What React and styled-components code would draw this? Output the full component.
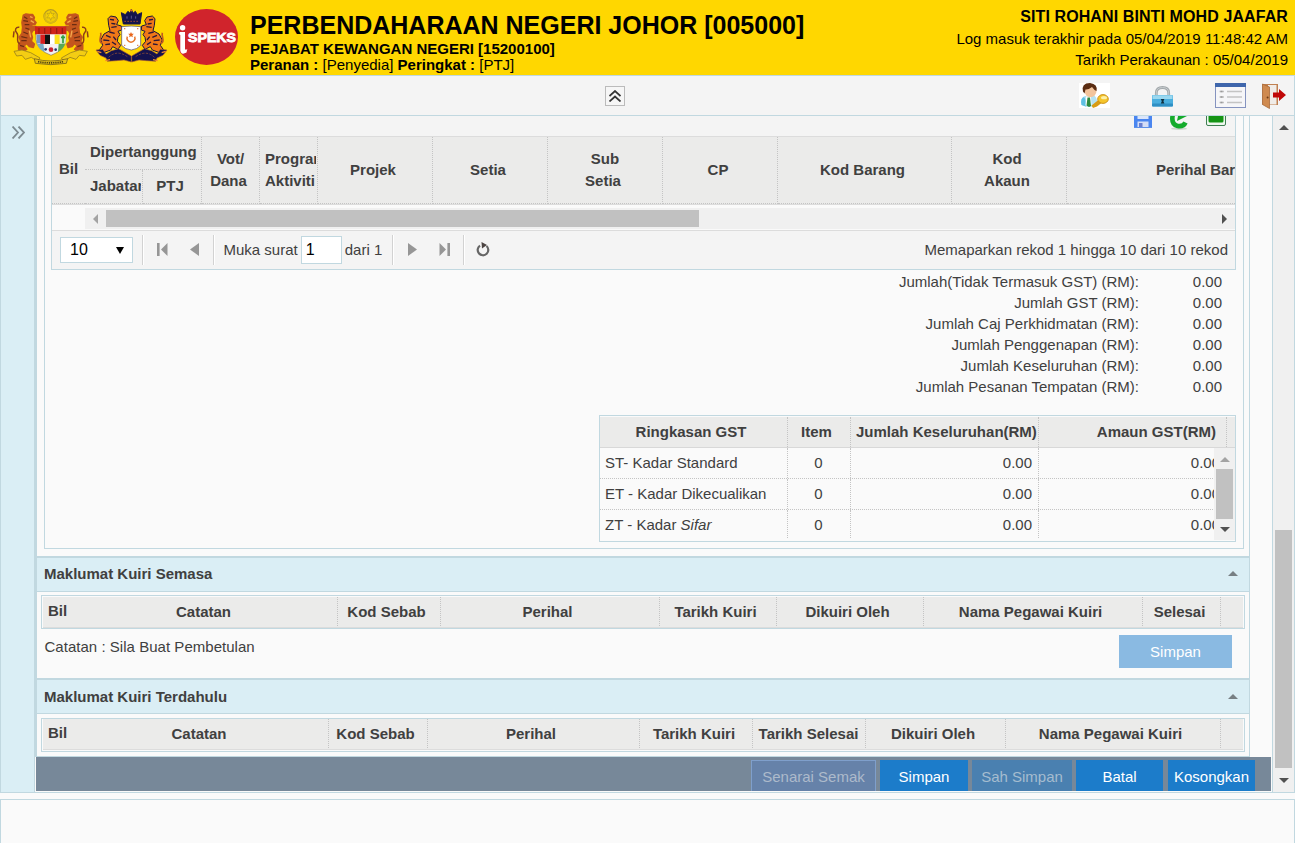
import React from "react";
import styled, { createGlobalStyle } from "styled-components";

const line = "#c1d8e0";
const dots = "#c4c4c4";

const GlobalStyle = createGlobalStyle`
  * { box-sizing: border-box; }
  body {
    margin: 0;
    background: #fafafa;
    font-family: "Liberation Sans", Arial, sans-serif;
    font-size: 15px;
    line-height: 21px;
    color: #404040;
    overflow: hidden;
  }
  svg { display: block; flex: none; }
`;

const Page = styled.div`
  width: 1295px;
  height: 843px;
  display: flex;
  flex-direction: column;
  overflow: hidden;
`;

/* ---------- banner ---------- */
const Banner = styled.header`
  height: 75px;
  flex: none;
  display: flex;
  background: #ffd700;
  color: #000;
  padding: 8px 7px 0 12px;
`;
const Logos = styled.div`
  display: flex;
  width: 238px;
  flex: none;
`;
const LogoGap = styled.i`
  width: ${(p) => p.$w}px;
  flex: none;
`;
const Titles = styled.div`
  flex: 1;
  padding-top: 3px;
`;
const Title = styled.h1`
  margin: 0;
  font-size: 25px;
  line-height: 29px;
  height: 29px;
`;
const Subtitle = styled.div`
  line-height: 17px;
  height: ${(p) => p.$h || 17}px;
  font-weight: ${(p) => (p.$bold ? 700 : 400)};
`;
const Session = styled.div`
  text-align: right;
  line-height: 21px;
`;
const UserName = styled.div`
  font-size: 16px;
  font-weight: 700;
  line-height: 20px;
  letter-spacing: 0.1px;
  margin-top: -1px;
  margin-bottom: 1px;
`;

/* ---------- toolbar ---------- */
const Toolbar = styled.nav`
  height: 41px;
  flex: none;
  display: flex;
  align-items: flex-start;
  background: #f4f4f4;
  border: 1px solid ${line};
  padding: 7px 8px 0 604px;
`;
const CollapseButton = styled.button`
  width: 20px;
  height: 20px;
  margin: 3px 454px 0 0;
  padding: 0;
  border: 1px solid #bbb;
  background: #f6f6f6;
  display: flex;
  align-items: center;
  justify-content: center;
`;
const ToolIcon = styled.div`
  width: ${(p) => p.$w}px;
  margin-right: ${(p) => p.$gap}px;
  padding-top: ${(p) => p.$top || 0}px;
  flex: none;
`;

/* ---------- body frame ---------- */
const Body = styled.main`
  height: 677px;
  flex: none;
  display: flex;
  border: 1px solid ${line};
  border-top: 0;
`;
const SideTab = styled.aside`
  width: 34px;
  flex: none;
  background: #daeef5;
  border-right: 1px solid ${line};
  padding: 10px 0 0 11px;
`;
const Work = styled.div`
  width: 1237px;
  flex: none;
  display: flex;
  flex-direction: column;
`;
const Content = styled.div`
  width: 1215px;
  height: 641px;
  border: solid ${line};
  border-width: 0 1px 1px 2px;
  display: flex;
  flex-direction: column;
`;
const Fieldset = styled.section`
  width: 1200px;
  height: 433px;
  margin: 0 0 7px 7px;
  border: solid ${line};
  border-width: 0 1px 1px 1px;
  padding-left: 6px;
  flex: none;
`;

/* ---------- main grid ---------- */
const Grid = styled.div`
  width: 1185px;
  height: 154px;
  border: solid ${line};
  border-width: 0 1px 1px 1px;
  overflow: hidden;
`;
const GridTools = styled.div`
  height: 21px;
  background: #f4f4f4;
  border-bottom: 1px solid #dcdcdc;
  display: flex;
  justify-content: flex-end;
  gap: 17px;
  padding-right: 9px;
`;
const HeadRow = styled.div`
  height: 68px;
  display: flex;
  overflow: hidden;
  background: #ebebea;
  border-bottom: 1px solid #dcdcdc;
  font-weight: 700;
`;
const HeadCell = styled.div`
  width: ${(p) => p.$w}px;
  flex: none;
  display: flex;
  flex-direction: column;
  justify-content: center;
  align-items: ${(p) => (p.$left ? "flex-start" : "center")};
  padding-left: ${(p) => p.$left || 0}px;
  padding-bottom: ${(p) => p.$lift || 0}px;
  border-bottom: 1px dotted ${dots};
  border-right: ${(p) => (p.$plain ? "0" : `1px dotted ${dots}`)};
  overflow: hidden;
  white-space: nowrap;
  line-height: 22px;
`;
const HeadText = styled.span`
  padding-right: ${(p) => (p.$trail ? 4 : 0)}px;
`;
const ClipText = styled.span`
  width: 51px;
  overflow: hidden;
`;
const HeadGroup = styled.div`
  width: 117px;
  flex: none;
  display: flex;
  flex-direction: column;
  border-right: 1px dotted ${dots};
`;
const GroupTop = styled.div`
  height: 33px;
  border-bottom: 1px dotted ${dots};
  padding: 4px 0 0 5px;
`;
const GroupSplit = styled.div`
  flex: 1;
  display: flex;
`;
const HScroll = styled.div`
  height: 25px;
  background: #fafafa;
  padding: 3px 0 0 33px;
`;
const HTrack = styled.div`
  height: 21px;
  background: #f0f0f0;
  display: flex;
  align-items: center;
  padding: 0 8px;
`;
const HThumb = styled.div`
  width: 593px;
  height: 17px;
  background: #c1c1c1;
  margin: 0 auto 0 8px;
`;
const Pager = styled.div`
  height: 39px;
  border-top: 1px solid #dcdcdc;
  background: #f4f4f4;
  display: flex;
  align-items: center;
  padding: 0 7px 0 8px;
`;
const PageSize = styled.div`
  width: 73px;
  height: 26px;
  border: 1px solid ${line};
  background: #fff;
  color: #000;
  font-size: 16px;
  display: flex;
  align-items: center;
  justify-content: space-between;
  padding: 0 8px 0 9px;
`;
const Sep = styled.i`
  width: 2px;
  height: 30px;
  background: linear-gradient(90deg, #d2d2d2 50%, #fff 50%);
  margin: 0 ${(p) => p.$r}px 0 ${(p) => p.$l}px;
`;
const PagerIcon = styled.div`
  width: 12px;
  margin-left: ${(p) => p.$l || 0}px;
  padding-bottom: 2px;
`;
const PagerText = styled.span`
  padding-bottom: 2px;
  margin-left: ${(p) => (p.$end ? "auto" : 0)};
`;
const PageInput = styled.div`
  width: 41px;
  height: 28px;
  border: 1px solid ${line};
  background: #fff;
  color: #000;
  padding: 2px 4px;
  font-size: 16px;
  margin: 0 3px 0 3px;
`;

/* ---------- totals ---------- */
const Totals = styled.dl`
  margin: 1px 0 18px;
  width: 1171px;
`;
const TotalRow = styled.div`
  height: 21px;
  display: flex;
  justify-content: flex-end;
`;
const TotalValue = styled.dd`
  margin: 0;
  width: 83px;
  text-align: right;
`;

/* ---------- GST summary ---------- */
const Summary = styled.div`
  width: 637px;
  height: 127px;
  margin-left: 548px;
  border: 1px solid ${line};
  padding-top: 1px;
`;
const SummaryHead = styled.div`
  height: 31px;
  display: flex;
  background: #ebebea;
  border-bottom: 1px solid #d8d8d8;
  font-weight: 700;
`;
const SummaryCell = styled.div`
  width: ${(p) => p.$w}px;
  flex: none;
  padding: 4px ${(p) => p.$pr ?? 6}px 0 ${(p) => p.$pl ?? 5}px;
  text-align: ${(p) => p.$align || "left"};
  border-right: 1px dotted ${dots};
  white-space: nowrap;
`;
const SummaryBody = styled.div`
  display: flex;
  height: 93px;
`;
const SummaryRows = styled.div`
  width: 614px;
  height: 91px;
  overflow: hidden;
`;
const SummaryRow = styled.div`
  height: 31px;
  width: 627px;
  display: flex;
  border-bottom: 1px dotted ${dots};
`;
const VTrack = styled.div`
  width: 21px;
  height: ${(p) => p.$h};
  background: #f0f0f0;
  display: flex;
  flex-direction: column;
  align-items: center;
  flex: none;
`;
const VThumb = styled.div`
  width: 17px;
  height: ${(p) => p.$h}px;
  margin-bottom: auto;
  background: #c1c1c1;
`;
const ArrowSlot = styled.div`
  height: ${(p) => p.$h}px;
  padding-top: ${(p) => p.$pad}px;
  flex: none;
`;

/* ---------- query sections ---------- */
const SectionHead = styled.div`
  height: 36px;
  flex: none;
  background: #daeef5;
  border-top: 2px solid ${line};
  border-bottom: 1px solid ${line};
  display: flex;
  align-items: center;
  justify-content: space-between;
  padding: 0 11px ${(p) => (p.$lift ? 3 : 1)}px 7px;
  font-weight: 700;
`;
const QueryTable = styled.div`
  width: 1204px;
  height: 34px;
  flex: none;
  margin: ${(p) => p.$top}px 0 0 4px;
  border: 1px solid ${line};
  padding: ${(p) => (p.$tight ? "0 1px 1px" : "1px 1px 0")};
  background: #fafafa;
`;
const QueryHead = styled.div`
  height: 31px;
  background: #ebebea;
  border-bottom: 1px solid #dcdcdc;
  display: flex;
  font-weight: 700;
`;
const QueryCell = styled.div`
  width: ${(p) => p.$w}px;
  flex: none;
  height: 29px;
  padding: ${(p) => (p.$first ? "3px 0 0 5px" : `4px ${p.$trail}px 0 0`)};
  text-align: ${(p) => (p.$first ? "left" : "center")};
  border-right: ${(p) => (p.$first ? "0" : `1px dotted ${dots}`)};
  white-space: nowrap;
`;
const NoteRow = styled.div`
  height: 49px;
  flex: none;
  display: flex;
  justify-content: space-between;
  padding: 6px 17px 0 7.5px;
  line-height: 24px;
  letter-spacing: 0.03px;
`;
const Action = styled.button`
  font: inherit;
  width: ${(p) => p.$w}px;
  height: ${(p) => p.$h || 31}px;
  margin-right: ${(p) => p.$gap || 0}px;
  padding: 0 0 ${(p) => p.$pb || 0}px;
  line-height: 21px;
  color: ${(p) => p.$fg || "#fff"};
  background: ${(p) => p.$bg || "#1c7cca"};
  border: solid ${(p) => p.$edge || p.$bg || "#1c7cca"};
  border-width: 1px 1px 0 1px;
  text-align: center;
  white-space: nowrap;
`;
const ActionBar = styled.div`
  height: 34px;
  margin-left: 1px;
  width: 1235px;
  background: #778899;
  display: flex;
  justify-content: flex-end;
  align-items: flex-end;
  padding-right: 16px;
`;
const PageScroll = styled.div`
  width: 22px;
  flex: none;
  border-left: 1px solid ${line};
`;
const Footer = styled.footer`
  flex: 1;
  margin-top: 6px;
  border: 1px solid ${line};
  border-bottom: 0;
`;

/* ---------- drawings ---------- */
const Tri = ({ dir, color = "#505050", long = 10, short = 5 }) => {
  const v = dir === "up" || dir === "down";
  const w = v ? long : short;
  const h = v ? short : long;
  const pts = {
    up: `0,${h} ${w / 2},0 ${w},${h}`,
    down: `0,0 ${w},0 ${w / 2},${h}`,
    left: `${w},0 ${w},${h} 0,${h / 2}`,
    right: `0,0 ${w},${h / 2} 0,${h}`,
  }[dir];
  return (
    <svg width={w} height={h}>
      <polygon points={pts} fill={color} />
    </svg>
  );
};

const FederalCrest = () => (
  <svg width="78" height="58" viewBox="36 24 234 174">
    <circle cx="152" cy="49" r="20" fill="#f0cc08" stroke="#b89c20" strokeWidth="4" />
    <path d="M136 42 A18 18 0 1 0 168 42" fill="none" stroke="#d9b814" strokeWidth="5" />
    <path d="M152 34 l3 8 8 -2 -5 7 6 7 -9 -1 -3 8 -3 -8 -9 1 6 -7 -5 -7 8 2z" fill="#ffd700" stroke="#a58f22" strokeWidth="1.5" />
    {[false, true].map((flip) => (
      <g key={String(flip)} transform={flip ? "translate(304 0) scale(-1 1)" : undefined}>
        <path d="M70 46 L78 42 88 44 98 44 103 52 101 60 108 68 105 73 94 73 96 80 108 80 108 88 98 92 94 100 97 112 94 124 103 132 100 142 88 139 80 130 72 138 80 148 72 152 56 148 56 134 62 124 58 112 66 100 68 82 66 68z" fill="#c4561e" stroke="#c4561e" strokeWidth="5" strokeLinejoin="round" />
        <path d="M72 50 l10 6 M70 62 l14 2 M74 74 l14 0 M76 84 l12 4 M70 96 l14 6 M64 110 l18 4 M64 122 l16 0 M60 136 l12 4" stroke="#6b2c12" strokeWidth="3.5" />
        <path d="M90 50 l8 3 M92 62 l10 6 M88 92 l4 20" stroke="#f4a84c" strokeWidth="4" />
        <path d="M60 132 C44 126 60 108 50 98 C42 90 48 80 58 82 M42 94 l-2 18" fill="none" stroke="#8f3f18" strokeWidth="4.5" />
        <path d="M42 154 L66 150 92 158 120 174 112 184 94 172 76 178 66 166 50 168z" fill="#f3cd14" stroke="#9a821a" strokeWidth="2.5" />
      </g>
    ))}
    <path d="M108 80 H198 V118 Q196 150 153 166 Q110 150 108 118z" fill="#eef0f2" stroke="#8a7a50" strokeWidth="2" />
    <path d="M105 79 H199 V103 H105z" fill="#d02418" />
    <path d="M117 84 v17 M134 84 v17 M152 84 v17 M170 84 v17 M187 84 v17" stroke="#9c1b12" strokeWidth="4" />
    <rect x="110" y="104" width="11" height="26" fill="#7a95c0" />
    <rect x="121" y="104" width="14" height="28" fill="#d71f1f" />
    <rect x="135" y="104" width="15" height="28" fill="#111" />
    <rect x="150" y="104" width="14" height="28" fill="#fff" />
    <rect x="164" y="104" width="15" height="28" fill="#fde21a" />
    <rect x="181" y="104" width="16" height="26" fill="#d8efd0" />
    <path d="M189 106 v24 M183 112 h12" stroke="#2e9d44" strokeWidth="5" />
    <path d="M112 131 H130 L134 156 Q114 146 112 131z" fill="#79abc7" />
    <path d="M176 131 H195 Q192 146 174 156z" fill="#58a958" />
    <path d="M137 134 h30 v8 h-30z" fill="#f8f0f0" />
    <circle cx="153" cy="149" r="7" fill="#cc2330" />
    <circle cx="137" cy="148" r="4" fill="#26356b" />
    <circle cx="167" cy="149" r="4" fill="#26356b" />
    <path d="M103 176 Q152 190 203 176 L199 190 Q152 198 106 190z" fill="#e8c416" stroke="#7a661a" strokeWidth="2.5" />
    <path d="M114 185 Q152 192 190 185" fill="none" stroke="#4f430f" strokeWidth="5" strokeDasharray="4 2.5" />
  </svg>
);

const StateCrest = () => (
  <svg width="75" height="57" viewBox="285 26 225 171">
    <path d="M364 40 L376 46 384 36 390 42 394 30 399 42 406 36 412 46 425 40 420 74 H370z" fill="#14144c" stroke="#14144c" strokeWidth="3" strokeLinejoin="round" />
    <path d="M373 66 h44" stroke="#9a4a34" strokeWidth="3" strokeDasharray="5 4" />
    <circle cx="394" cy="33" r="3.5" fill="#d86a28" />
    <path d="M381 51 v7 M394 49 v9 M407 51 v7" stroke="#5c5a90" strokeWidth="3" />
    {[false, true].map((flip) => (
      <g key={String(flip)} transform={flip ? "translate(789 0) scale(-1 1)" : undefined}>
        <path d="M324 58 L332 50 348 53 355 64 350 76 364 80 365 92 354 96 360 106 354 114 352 126 362 138 354 150 338 142 332 152 310 160 298 152 308 138 302 122 312 104 330 94 326 78z" fill="#f07818" stroke="#1d153c" strokeWidth="3" />
        <path d="M330 60 l12 2 M334 72 l12 2 M334 84 l16 -2 M328 98 l16 4 M318 108 l14 6 M310 122 l18 2 M316 136 l14 -2 M340 112 l8 10 M336 128 l12 8" stroke="#2b1638" strokeWidth="4" />
        <path d="M306 132 C292 128 306 112 302 100" fill="none" stroke="#c05a20" strokeWidth="5" />
        <path d="M288 152 L308 150 318 164 334 154 356 148 394 170 394 188 372 182 350 184 322 186 318 176 300 168z" fill="#14124e" stroke="#b0602c" strokeWidth="2" />
        <path d="M326 174 Q350 150 382 172" fill="none" stroke="#a85a34" strokeWidth="2" strokeDasharray="7 4" />
        <path d="M292 156 l12 4 M316 184 l14 -3" stroke="#f08a30" strokeWidth="4" />
      </g>
    ))}
    <path d="M365 82 Q394 78 422 82 V138 Q412 150 394 152 Q374 150 365 138z" fill="#fff" stroke="#4a4468" strokeWidth="2" />
    <path d="M382 112 A12 12 0 1 0 404 112" fill="none" stroke="#e8762c" strokeWidth="4.5" />
    <path d="M393 98 l2.500 5.500 6 0 -4.500 4.500 2 6 -6 -3.500 -6 3.500 2 -6 -4.500 -4.500 6 0z" fill="#e8661c" />
    <path d="M372 88 h4 M411 88 h4 M372 138 h4 M411 138 h4" stroke="#e68a58" strokeWidth="4" />
  </svg>
);

const SpeksText = styled.text`
  font-family: "Liberation Sans", Arial, sans-serif;
  font-weight: 700;
`;
const Speks = () => (
  <svg width="65" height="58" viewBox="0 0 65 58">
    <ellipse cx="33.5" cy="29" rx="31.5" ry="28" fill="#d0242c" />
    <circle cx="9.600" cy="19.700" r="2.700" fill="#fff" />
    <path d="M6.500 24 H12 V41 Q12.500 42.300 14.300 41 L13.500 44.500 Q8 47.500 7.300 42.500 V27 L5.800 26z" fill="#fff" />
    <SpeksText x="15" y="34" fontSize="12.400" fill="#fff" stroke="#fff" strokeWidth=".8" textLength="48" lengthAdjust="spacingAndGlyphs">SPEKS</SpeksText>
  </svg>
);

const UserKey = () => (
  <svg width="31" height="25" viewBox="0 0 31 25">
    <rect width="31" height="25" fill="#fff" />
    <path d="M2.500 22 Q1.500 14 6 13 L14 12 Q19 14 18 22 Q10 26 2.500 22z" fill="#b4e2f2" />
    <path d="M2.500 22 Q1 15 5 14 Q8 18 7 23.500z" fill="#5fc0e2" />
    <path d="M7 13.500 h5 l.500 9 h-6z" fill="#fff" />
    <path d="M8.500 14.500 l2.500 0 1 8.500 -2 1 -2.500 -1.500z" fill="#2d8a3e" />
    <ellipse cx="11.500" cy="8" rx="6" ry="6.200" fill="#f3c49c" />
    <path d="M4 8.500 Q2 0 11 0 Q19 1 17.500 8 Q15 7 13 4 Q9 7 6.500 6.500 L5.500 10.500z" fill="#5a2c12" />
    <path d="M20 16.500 L12.500 22.500 14 25 18 23.500 22.500 20z" fill="#d99c14" />
    <ellipse cx="24" cy="16" rx="5.300" ry="4.400" fill="#f5c52c" stroke="#c88c10" strokeWidth=".9" />
    <ellipse cx="25" cy="14.700" rx="3" ry="1.600" fill="#fdf0a8" />
  </svg>
);
const Padlock = () => (
  <svg width="21" height="21" viewBox="0 0 21 21">
    <path d="M4.300 10 V7 Q4.300 1.500 10.500 1.500 Q16.700 1.500 16.700 7 V10" fill="none" stroke="#a3a9ac" strokeWidth="2.800" />
    <path d="M4.300 10 V7 Q4.300 1.500 10.500 1.500 Q16.700 1.500 16.700 7 V10" fill="none" stroke="#c9ced0" strokeWidth=".9" />
    <rect x="0" y="9" width="21" height="11.500" rx="1" fill="#4aaede" />
    <rect x="0.500" y="9.300" width="20" height="3.700" fill="#9bd8ef" />
    <rect x="0" y="17.500" width="21" height="3" rx="1" fill="#2f8fc4" />
    <path d="M8.800 13 h3.600 l-1 2.200 1 2.300 h-3.600 l1 -2.300z" fill="#10303f" />
  </svg>
);
const ListIcon = () => (
  <svg width="31" height="25" viewBox="0 0 31 25">
    <rect x=".5" y=".5" width="30" height="24" fill="#f6f6f8" stroke="#8593bf" />
    <rect width="31" height="4" fill="#3f66ac" />
    <path d="M4.500 8.500 h4.500 M12 8.500 h15 M4.500 14 h4.500 M12 14 h15 M4.500 19.500 h4.500 M12 19.500 h15" stroke="#c4c4c4" strokeWidth="1.300" />
    <path d="M5.500 8.500 h2 M5.500 14 h2 M5.500 19.500 h2" stroke="#999" strokeWidth="1.300" />
  </svg>
);
const ExitIcon = () => (
  <svg width="24" height="26" viewBox="0 0 24 26">
    <rect x=".5" y="1" width="15.500" height="21" fill="#c08050" />
    <rect x="6" y="2" width="8.500" height="19.500" fill="#f0ece8" />
    <path d="M.500 1 L7.500 4 V25.500 L.500 21.500z" fill="#cf8a50" stroke="#a86a3a" strokeWidth=".8" />
    <circle cx="5.600" cy="14.500" r="1" fill="#6b3a16" />
    <path d="M11 9.500 H17 V6 L24 12 17 18 V14.500 H11z" fill="#c00808" />
  </svg>
);
const SaveIcon = () => (
  <svg width="19" height="12" viewBox="0 0 19 12">
    <rect width="18" height="12" fill="#4a86f0" />
    <rect x="3.500" width="11" height="3" fill="#dbe6fb" />
    <rect x="3.500" y="5.500" width="11" height="5.500" fill="#d4ddf6" />
    <rect x="5" y="7" width="3.500" height="4" fill="#6a7fd0" />
    <rect y="11" width="18" height="1" fill="#5d90e8" />
  </svg>
);
const ReloadGreen = () => (
  <svg width="19" height="14" viewBox="0 0 19 14">
    <ellipse cx="9" cy="12.700" rx="8" ry="1.200" fill="#cfd6cf" />
    <path d="M3 -2 Q0.500 8 7.500 10 Q13.500 11 15.500 6.500" fill="none" stroke="#14ab2c" strokeWidth="4.600" />
    <path d="M7 5 L8 0 13 -1 17 0 12 2.500z" fill="#14ab2c" />
  </svg>
);
const ScreenGreen = () => (
  <svg width="20" height="10" viewBox="0 0 20 10">
    <path d="M.500 -2 V8 Q.500 9.500 2 9.500 H18 Q19.500 9.500 19.500 8 V-2" fill="#eef7ee" stroke="#3f7f52" />
    <path d="M2.500 -1 h15 v6 q0 1.500 -1.500 1.500 h-12 q-1.500 0 -1.500 -1.500z" fill="#149414" />
  </svg>
);
const Chevrons = ({ rotate = 0, size = 12, color = "#333" }) => (
  <svg width={size} height={size} viewBox="0 0 12 12">
    <g transform={`rotate(${rotate} 6 6)`} fill="none" stroke={color} strokeWidth="1.700">
      <path d="M.500 6 L6 1 L11.500 6" />
      <path d="M.500 11.500 L6 6.500 L11.500 11.500" />
    </g>
  </svg>
);
const PageEdge = ({ last }) => (
  <svg width="11" height="13" viewBox="0 0 11 13">
    <g transform={last ? "translate(11 0) scale(-1 1)" : undefined} fill="#969696">
      <rect x="0" y="0" width="2.600" height="13" />
      <path d="M10.500 0 V13 L4 6.500z" />
    </g>
  </svg>
);
const Reload = () => (
  <svg width="14" height="15" viewBox="0 0 14 15">
    <path d="M4 3.600 A5.300 5.300 0 1 0 10.500 4" fill="none" stroke="#666" strokeWidth="2.200" />
    <path d="M5.500 0 L11 3 L6 6.500z" fill="#4c4442" />
  </svg>
);

/* ---------- data ---------- */
const columns = [
  [115, ["Projek"]],
  [115, ["Setia"]],
  [115, ["Sub", "Setia"]],
  [115, ["CP"]],
  [174, ["Kod Barang"]],
  [115, ["Kod", "Akaun"]],
];
const totals = [
  "Jumlah(Tidak Termasuk GST) (RM):",
  "Jumlah GST (RM):",
  "Jumlah Caj Perkhidmatan (RM):",
  "Jumlah Penggenapan (RM):",
  "Jumlah Keseluruhan (RM):",
  "Jumlah Pesanan Tempatan (RM):",
];
const gstRows = [
  "ST- Kadar Standard",
  "ET - Kadar Dikecualikan",
  <>ZT - Kadar <em>Sifar</em></>,
];
const currentQuery = [
  [268, "Catatan", 0], [103, "Kod Sebab", 5], [219, "Perihal", 5], [117, "Tarikh Kuiri", 5],
  [147, "Dikuiri Oleh", 5], [219, "Nama Pegawai Kuiri", 5], [78, "Selesai", 4],
];
const pastQuery = [
  [259, "Catatan", 0], [99, "Kod Sebab", 5], [212, "Perihal", 5], [113, "Tarikh Kuiri", 4],
  [113, "Tarikh Selesai", 1], [140, "Dikuiri Oleh", 5], [215, "Nama Pegawai Kuiri", 5],
];

const Queries = ({ cols, tight, top }) => (
  <QueryTable $tight={tight} $top={top}>
    <QueryHead>
      <QueryCell $w={27} $first>Bil</QueryCell>
      {cols.map(([w, label, trail]) => (
        <QueryCell key={label} $w={w} $trail={trail}>{label}</QueryCell>
      ))}
    </QueryHead>
  </QueryTable>
);

export default function App() {
  return (
    <Page>
      <GlobalStyle />
      <Banner>
        <Logos>
          <FederalCrest />
          <LogoGap $w={5} />
          <StateCrest />
          <LogoGap $w={3} />
          <Speks />
        </Logos>
        <Titles>
          <Title>PERBENDAHARAAN NEGERI JOHOR [005000]</Title>
          <Subtitle $bold $h={16}>PEJABAT KEWANGAN NEGERI [15200100]</Subtitle>
          <Subtitle><b>Peranan :</b> [Penyedia] <b>Peringkat :</b> [PTJ]</Subtitle>
        </Titles>
        <Session>
          <UserName>SITI ROHANI BINTI MOHD JAAFAR</UserName>
          <div>Log masuk terakhir pada 05/04/2019 11:48:42 AM</div>
          <div>Tarikh Perakaunan : 05/04/2019</div>
        </Session>
      </Banner>

      <Toolbar>
        <CollapseButton><Chevrons /></CollapseButton>
        <ToolIcon $w={31} $gap={42}><UserKey /></ToolIcon>
        <ToolIcon $w={21} $gap={42} $top={3}><Padlock /></ToolIcon>
        <ToolIcon $w={31} $gap={16}><ListIcon /></ToolIcon>
        <ToolIcon $w={24} $gap={0}><ExitIcon /></ToolIcon>
      </Toolbar>

      <Body>
        <SideTab><Chevrons rotate={90} size={13} color="#7d8a90" /></SideTab>
        <Work>
          <Content>
            <Fieldset>
              <Grid>
                <GridTools><SaveIcon /><ReloadGreen /><ScreenGreen /></GridTools>
                <HeadRow>
                  <HeadCell $w={33} $lift={2} $plain>Bil</HeadCell>
                  <HeadGroup>
                    <GroupTop>Dipertanggung</GroupTop>
                    <GroupSplit>
                      <HeadCell $w={58} $left={5} $lift={2}><ClipText>Jabatan</ClipText></HeadCell>
                      <HeadCell $w={58} $lift={2} $plain><HeadText $trail>PTJ</HeadText></HeadCell>
                    </GroupSplit>
                  </HeadGroup>
                  <HeadCell $w={58}>
                    <HeadText>Vot/</HeadText>
                    <HeadText $trail>Dana</HeadText>
                  </HeadCell>
                  <HeadCell $w={58} $left={5}>
                    <ClipText>Program/</ClipText>
                    <ClipText>Aktiviti</ClipText>
                  </HeadCell>
                  {columns.map(([w, lines]) => (
                    <HeadCell key={lines.join()} $w={w}>
                      {lines.map((t) => (
                        <HeadText key={t} $trail={t !== "Sub"}>{t}</HeadText>
                      ))}
                    </HeadCell>
                  ))}
                  <HeadCell $w={290} $left={89}>Perihal Barang</HeadCell>
                </HeadRow>
                <HScroll>
                  <HTrack>
                    <Tri dir="left" color="#a3a3a3" />
                    <HThumb />
                    <Tri dir="right" />
                  </HTrack>
                </HScroll>
                <Pager>
                  <PageSize>
                    <PagerText>10</PagerText>
                    <Tri dir="down" color="#000" long={8} short={7} />
                  </PageSize>
                  <Sep $l={9} $r={13} />
                  <PagerIcon><PageEdge /></PagerIcon>
                  <PagerIcon $l={21}><Tri dir="left" color="#969696" long={13} short={9} /></PagerIcon>
                  <Sep $l={11} $r={8.5} />
                  <PagerText>Muka surat</PagerText>
                  <PageInput>1</PageInput>
                  <PagerText>dari 1</PagerText>
                  <Sep $l={10} $r={14} />
                  <PagerIcon><Tri dir="right" color="#969696" long={13} short={9} /></PagerIcon>
                  <PagerIcon $l={19}><PageEdge last /></PagerIcon>
                  <Sep $l={12} $r={11} />
                  <PagerIcon><Reload /></PagerIcon>
                  <PagerText $end>Memaparkan rekod 1 hingga 10 dari 10 rekod</PagerText>
                </Pager>
              </Grid>

              <Totals>
                {totals.map((t) => (
                  <TotalRow key={t}><dt>{t}</dt><TotalValue>0.00</TotalValue></TotalRow>
                ))}
              </Totals>

              <Summary>
                <SummaryHead>
                  <SummaryCell $w={188} $pr={10} $align="center">Ringkasan GST</SummaryCell>
                  <SummaryCell $w={63} $pr={10} $align="center">Item</SummaryCell>
                  <SummaryCell $w={188} $pr={0}>Jumlah Keseluruhan(RM)</SummaryCell>
                  <SummaryCell $w={188} $pr={10} $align="right">Amaun GST(RM)</SummaryCell>
                </SummaryHead>
                <SummaryBody>
                  <SummaryRows>
                    {gstRows.map((label, i) => (
                      <SummaryRow key={i}>
                        <SummaryCell $w={188}>{label}</SummaryCell>
                        <SummaryCell $w={63} $align="center">0</SummaryCell>
                        <SummaryCell $w={188} $align="right">0.00</SummaryCell>
                        <SummaryCell $w={188} $align="right">0.00</SummaryCell>
                      </SummaryRow>
                    ))}
                  </SummaryRows>
                  <VTrack $h="92px">
                    <ArrowSlot $h={21} $pad={9}><Tri dir="up" color="#a3a3a3" /></ArrowSlot>
                    <VThumb $h={50} />
                    <ArrowSlot $h={13} $pad={0}><Tri dir="down" /></ArrowSlot>
                  </VTrack>
                </SummaryBody>
              </Summary>
            </Fieldset>

            <SectionHead $lift>Maklumat Kuiri Semasa <Tri dir="up" color="#777f83" /></SectionHead>
            <Queries cols={currentQuery} top={3} />
            <NoteRow>
              <span>Catatan : Sila Buat Pembetulan</span>
              <Action $w={113} $h={33} $pb={1} $bg="#8abae2">Simpan</Action>
            </NoteRow>
            <SectionHead>Maklumat Kuiri Terdahulu <Tri dir="up" color="#777f83" /></SectionHead>
            <Queries cols={pastQuery} tight top={4} />
          </Content>
          <ActionBar>
            <Action $w={125} $gap={4} $bg="#6682a9" $edge="#7f9fcb" $fg="#adbacb">Senarai Semak</Action>
            <Action $w={88} $gap={4}>Simpan</Action>
            <Action $w={100} $gap={4} $bg="#4a80b0" $fg="#a5bccf">Sah Simpan</Action>
            <Action $w={87} $gap={5}>Batal</Action>
            <Action $w={87}>Kosongkan</Action>
          </ActionBar>
        </Work>
        <PageScroll>
          <VTrack $h="676px">
            <ArrowSlot $h={414} $pad={9}><Tri dir="up" /></ArrowSlot>
            <VThumb $h={238} />
            <ArrowSlot $h={14} $pad={0}><Tri dir="down" /></ArrowSlot>
          </VTrack>
        </PageScroll>
      </Body>
      <Footer />
    </Page>
  );
}
